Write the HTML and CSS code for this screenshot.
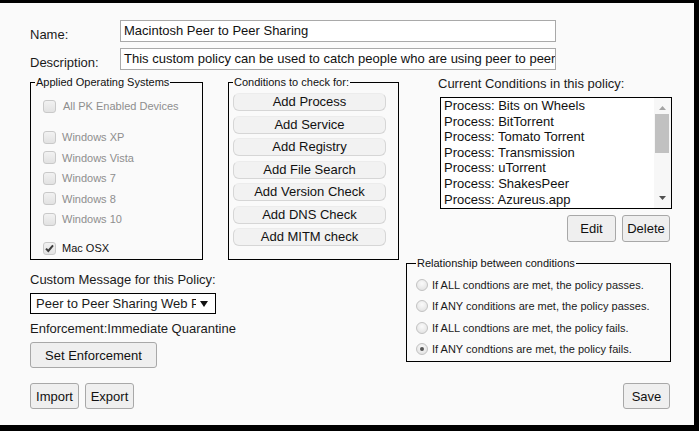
FILE: index.html
```html
<!DOCTYPE html>
<html>
<head>
<meta charset="utf-8">
<link rel="stylesheet" href="styles.css">
</head>
<body>
<div class="frame">
  <div class="field-row">
    <label class="field-label">Name:</label>
    <div class="text-input">Macintosh Peer to Peer Sharing</div>
  </div>
  <div class="field-row">
    <label class="field-label">Description:</label>
    <div class="text-input">This custom policy can be used to catch people who are using peer to peer</div>
  </div>

  <div class="main">
    <div class="left-col">
      <div class="boxes">
        <fieldset class="group os">
          <legend>Applied Operating Systems</legend>
          <div class="os-list">
            <div class="check-row disabled first"><span class="box"></span><span>All PK Enabled Devices</span></div>
            <div class="check-row disabled gap"><span class="box"></span><span>Windows XP</span></div>
            <div class="check-row disabled"><span class="box"></span><span>Windows Vista</span></div>
            <div class="check-row disabled"><span class="box"></span><span>Windows 7</span></div>
            <div class="check-row disabled"><span class="box"></span><span>Windows 8</span></div>
            <div class="check-row disabled"><span class="box"></span><span>Windows 10</span></div>
            <div class="check-row mac"><span class="box"><svg width="11" height="11" viewBox="0 0 11 11"><path d="M2 5.6 L4.3 8 L9 2.4" fill="none" stroke="#3c3c3c" stroke-width="2"/></svg></span><span>Mac OSX</span></div>
          </div>
        </fieldset>
        <fieldset class="group conds">
          <legend>Conditions to check for:</legend>
          <div class="cond-list">
            <button class="add-btn">Add Process</button>
            <button class="add-btn">Add Service</button>
            <button class="add-btn">Add Registry</button>
            <button class="add-btn">Add File Search</button>
            <button class="add-btn">Add Version Check</button>
            <button class="add-btn">Add DNS Check</button>
            <button class="add-btn">Add MITM check</button>
          </div>
        </fieldset>
      </div>
      <div class="line-text msg-label">Custom Message for this Policy:</div>
      <div class="select-box"><span class="select-text">Peer to Peer Sharing Web Page</span><svg class="select-arrow" width="8" height="6" viewBox="0 0 8 6"><path d="M0 0 H8 L4 6 Z" fill="#111"/></svg></div>
      <div class="line-text enforcement">Enforcement:Immediate Quarantine</div>
      <button class="btn set-enf">Set Enforcement</button>
    </div>

    <div class="right-col">
      <div class="current">
        <div class="line-text current-label">Current Conditions in this policy:</div>
        <div class="listbox">
          <div class="items">
            <div>Process: Bits on Wheels</div>
            <div>Process: BitTorrent</div>
            <div>Process: Tomato Torrent</div>
            <div>Process: Transmission</div>
            <div>Process: uTorrent</div>
            <div>Process: ShakesPeer</div>
            <div>Process: Azureus.app</div>
          </div>
          <div class="scrollbar">
            <svg class="arrow-up" width="7" height="4" viewBox="0 0 7 4"><path d="M0 4 L3.5 0 L7 4 Z" fill="#a3a3a3"/></svg>
            <div class="thumb"></div>
            <svg class="arrow-down" width="7" height="4" viewBox="0 0 7 4"><path d="M0 0 L3.5 4 L7 0 Z" fill="#505050"/></svg>
          </div>
        </div>
        <div class="edit-row">
          <button class="btn edit">Edit</button>
          <button class="btn delete">Delete</button>
        </div>
      </div>
      <fieldset class="group rel">
        <legend>Relationship between conditions</legend>
        <div class="radio-list">
          <div class="radio-row"><span class="radio"></span><span>If ALL condtions are met, the policy passes.</span></div>
          <div class="radio-row"><span class="radio"></span><span>If ANY conditions are met, the policy passes.</span></div>
          <div class="radio-row"><span class="radio"></span><span>If ALL condtions are met, the policy fails.</span></div>
          <div class="radio-row"><span class="radio checked"></span><span>If ANY condtions are met, the policy fails.</span></div>
        </div>
      </fieldset>
    </div>
  </div>

  <div class="footer">
    <div class="footer-left">
      <button class="btn import">Import</button>
      <button class="btn export">Export</button>
    </div>
    <button class="btn save">Save</button>
  </div>
</div>
</body>
</html>
```

FILE: styles.css
```css
html, body {
  margin: 0;
  padding: 0;
  background: #ffffff;
}
body {
  font-family: "Liberation Sans", Arial, sans-serif;
  font-size: 13px;
  color: #1a1a1a;
}
.frame {
  width: 699px;
  height: 431px;
  box-sizing: border-box;
  border-top: 3px solid #000;
  border-right: 5px solid #000;
  border-bottom: 6px solid #000;
  background: #fafafa;
  padding: 17px 22px 0 30px;
  display: flex;
  flex-direction: column;
}
.field-row {
  display: flex;
  align-items: flex-end;
  height: 22px;
  margin-bottom: 6px;
}
.field-label {
  width: 90px;
  line-height: 15px;
  font-size: 13px;
}
.text-input {
  width: 436px;
  height: 22px;
  box-sizing: border-box;
  border: 1px solid #a9a9a9;
  background: #fff;
  font-size: 13px;
  line-height: 20px;
  padding: 0 2px 0 3px;
  white-space: nowrap;
  overflow: hidden;
  color: #111;
}
.main {
  display: grid;
  grid-template-columns: 369px 266px;
  column-gap: 7px;
}
.left-col, .right-col {
  display: flex;
  flex-direction: column;
  align-items: flex-start;
}
.boxes {
  display: flex;
  gap: 25px;
  height: 184px;
}
.group {
  margin: 0;
  border: 1px solid #000;
  box-sizing: border-box;
  min-width: 0;
}
.group legend {
  font-size: 11px;
  line-height: 13px;
  padding: 0 1px;
  color: #111;
}
.os {
  width: 173px;
  height: 184px;
  padding: 0 4px;
}
.os-list {
  padding-left: 8px;
}
.check-row {
  display: flex;
  align-items: center;
  height: 20.5px;
  font-size: 11px;
  gap: 6px;
}
.check-row.first {
  margin-top: 6.75px;
}
.check-row.first span:last-child {
  margin-left: 1px;
}
.check-row.gap {
  margin-top: 10.5px;
}
.check-row.mac {
  margin-top: 8.5px;
  color: #111;
}
.check-row.disabled {
  color: #8e8e8e;
}
.box {
  width: 13px;
  height: 13px;
  box-sizing: border-box;
  border: 1px solid #c9c9c9;
  border-radius: 3px;
  background: linear-gradient(#f2f2f2, #e2e2e2);
  display: flex;
  align-items: center;
  justify-content: center;
  flex: none;
}
.conds {
  width: 171px;
  height: 184px;
  padding: 0 4px;
}
.cond-list {
  display: flex;
  flex-direction: column;
  gap: 4.5px;
  margin-top: 4px;
}
.add-btn {
  width: 153px;
  height: 18px;
  padding: 0;
  margin: 0;
  font-family: inherit;
  font-size: 13px;
  line-height: 16px;
  color: #111;
  background: #f2f2f2;
  border: 1px solid #d6d6d6;
  border-top-color: #ececec;
  border-radius: 6px;
}
.line-text {
  line-height: 15px;
  font-size: 13px;
}
.msg-label {
  margin-top: 12px;
}
.select-box {
  margin-top: 6px;
  width: 186px;
  height: 21px;
  box-sizing: border-box;
  border: 1px solid #000;
  background: #fff;
  display: flex;
  align-items: center;
  padding: 0 7px 0 5px;
  gap: 4px;
}
.select-text {
  flex: 1;
  white-space: nowrap;
  overflow: hidden;
  font-size: 13px;
  line-height: 19px;
}
.select-arrow {
  flex: none;
}
.enforcement {
  margin-top: 6.5px;
}
.btn {
  margin: 0;
  padding: 0;
  height: 26px;
  font-family: inherit;
  font-size: 13px;
  color: #111;
  background: #efefef;
  border: 1px solid #a8a8a8;
  border-radius: 3px;
}
.set-enf {
  margin-top: 6.5px;
  width: 127px;
}
.current {
  margin-left: 34px;
  width: 232px;
  display: flex;
  flex-direction: column;
}
.current-label {
  margin-left: -2px;
}
.listbox {
  margin-top: 6px;
  height: 112px;
  box-sizing: border-box;
  border: 1px solid #000;
  background: #fff;
  display: flex;
}
.items {
  flex: 1;
  padding-left: 3px;
  font-size: 13px;
  line-height: 15.6px;
  color: #111;
  overflow: hidden;
}
.scrollbar {
  width: 17px;
  flex: none;
  background: #f7f7f7;
  position: relative;
}
.arrow-up {
  position: absolute;
  top: 8px;
  left: 5px;
}
.arrow-down {
  position: absolute;
  bottom: 8px;
  left: 5px;
}
.thumb {
  position: absolute;
  top: 16px;
  left: 1px;
  width: 14px;
  height: 39px;
  background: #c1c1c1;
}
.edit-row {
  margin-top: 6px;
  display: flex;
  justify-content: flex-end;
  gap: 6px;
  padding-right: 2px;
}
.edit {
  width: 49px;
  height: 27px;
}
.delete {
  width: 48px;
  height: 27px;
}
.rel {
  margin-top: 15px;
  width: 265px;
  height: 105px;
  padding: 0 4px 0 9px;
}
.radio-list {
  margin-top: 4.5px;
  margin-left: 0;
}
.radio-row {
  display: flex;
  align-items: center;
  height: 21.3px;
  font-size: 11px;
  gap: 4px;
}
.radio {
  width: 12px;
  height: 12px;
  box-sizing: border-box;
  border: 1px solid #c2c2c2;
  border-radius: 50%;
  background: radial-gradient(circle at 50% 35%, #fafafa, #dedede);
  display: flex;
  align-items: center;
  justify-content: center;
  flex: none;
}
.radio.checked::after {
  content: "";
  width: 4px;
  height: 4px;
  border-radius: 50%;
  background: #555;
}
.footer {
  margin-top: 15px;
  display: flex;
  justify-content: space-between;
  align-items: flex-start;
  padding-right: 2px;
}
.footer-left {
  display: flex;
  gap: 6px;
}
.import, .export {
  width: 49px;
}
.save {
  width: 47px;
}
```
